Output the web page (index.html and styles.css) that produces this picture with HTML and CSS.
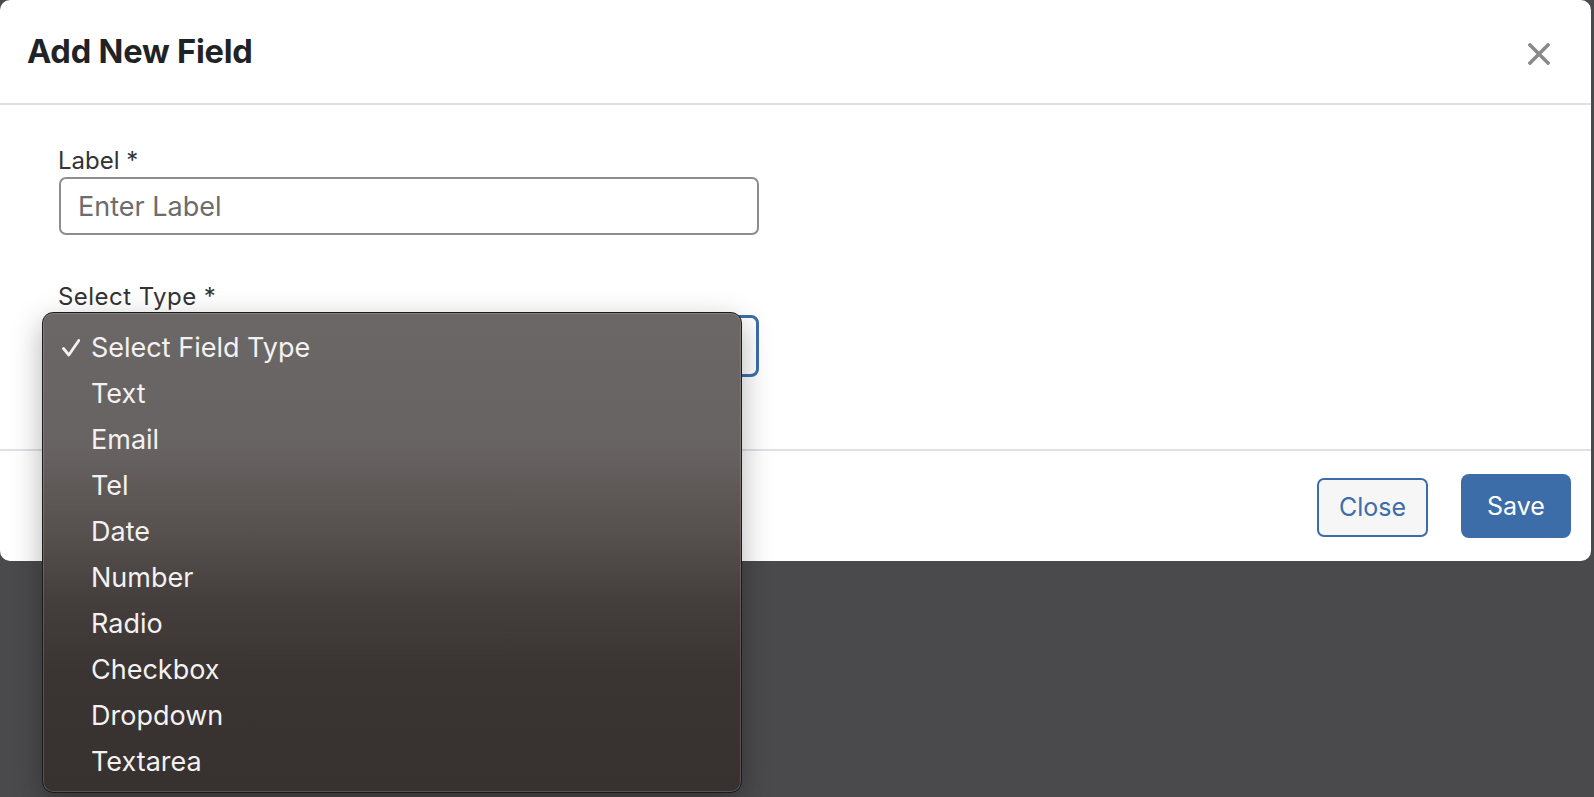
FILE: index.html
```html
<!DOCTYPE html>
<html lang="en">
<head>
<meta charset="utf-8">
<title>Add New Field</title>
<link rel="stylesheet" href="styles.css">
</head>
<body>
<div class="modal">
  <div class="modal-header">
    <h5 class="modal-title">Add New Field</h5>
    <button class="btn-close" aria-label="Close">
      <svg viewBox="0 0 22 22" width="22" height="22"><path d="M2 2 L20 20 M20 2 L2 20" stroke="#8a8a8a" stroke-width="3.6" stroke-linecap="square" fill="none"/></svg>
    </button>
  </div>
  <div class="modal-body">
    <div class="field">
      <label class="field-label">Label *</label>
      <input class="text-input" type="text" placeholder="Enter Label">
    </div>
    <div class="field">
      <label class="field-label field-label-wide">Select Type *</label>
      <div class="select-wrap">
        <div class="select-box" aria-label="Select Field Type"></div>
        <ul class="menu">
          <li class="menu-item"><span class="check"><svg viewBox="0 0 18 18" width="18" height="18"><path d="M1.5 9.5 L6.8 16 L16.8 1.5" stroke="#f3f1f1" stroke-width="2.8" stroke-linecap="round" stroke-linejoin="round" fill="none"/></svg></span>Select Field Type</li>
          <li class="menu-item"><span class="check"></span>Text</li>
          <li class="menu-item"><span class="check"></span>Email</li>
          <li class="menu-item"><span class="check"></span>Tel</li>
          <li class="menu-item"><span class="check"></span>Date</li>
          <li class="menu-item"><span class="check"></span>Number</li>
          <li class="menu-item"><span class="check"></span>Radio</li>
          <li class="menu-item"><span class="check"></span>Checkbox</li>
          <li class="menu-item"><span class="check"></span>Dropdown</li>
          <li class="menu-item"><span class="check"></span>Textarea</li>
        </ul>
      </div>
    </div>
  </div>
  <div class="modal-footer">
    <button class="btn btn-outline">Close</button>
    <button class="btn btn-primary">Save</button>
  </div>
</div>
</body>
</html>
```

FILE: styles.css
```css
* { box-sizing: border-box; }

html, body {
  margin: 0;
  padding: 0;
}

body {
  width: 1594px;
  height: 797px;
  overflow: hidden;
  background: #4a4a4c;
  font-family: Inter, "Liberation Sans", sans-serif;
  color: #212529;
}

.modal {
  width: 1591px;
  height: 561px;
  background: #ffffff;
  border-radius: 10px;
  display: flex;
  flex-direction: column;
}

.modal-header {
  flex: none;
  height: 105px;
  display: flex;
  align-items: center;
  justify-content: space-between;
  padding: 0 41px 0 27px;
  border-bottom: 2px solid #dfe1e4;
}

.modal-title {
  margin: 0;
  font-size: 32.6px;
  font-weight: 700;
  line-height: 1;
  color: #1f2326;
  letter-spacing: -0.2px;
}

.btn-close {
  width: 22px;
  height: 22px;
  padding: 0;
  margin-top: 4px;
  border: none;
  background: transparent;
  display: flex;
}

.modal-body {
  flex: none;
  height: 344px;
  padding: 40px 0 0 58px;
}

.field {
  width: 702px;
}

.field + .field {
  margin-top: 46px;
}

.field-label {
  display: block;
  font-size: 24px;
  line-height: 32px;
  color: #333333;
}

.field-label-wide {
  letter-spacing: 0.45px;
}

.text-input {
  display: block;
  width: 700px;
  height: 58px;
  margin-left: 1px;
  padding: 0 17px;
  border: 2px solid #8d8d8d;
  border-radius: 7px;
  font-family: Inter, "Liberation Sans", sans-serif;
  font-size: 27px;
  color: #212529;
  background: #fff;
  outline: none;
}

.text-input::placeholder {
  color: #6c6c6c;
}

.select-wrap {
  position: relative;
  margin-top: 2px;
  margin-left: 1px;
}

.select-box {
  width: 700px;
  height: 62px;
  border: 3px solid #3d6da8;
  border-radius: 8px;
  background: #fff;
}

.menu {
  position: absolute;
  left: -17px;
  top: -3px;
  width: 700px;
  height: 481px;
  margin: 0;
  padding: 11px 0 8px;
  list-style: none;
  border-radius: 11px;
  border: 1px solid #1c1b1b;
  background: linear-gradient(to bottom, #6b6767 0%, #676362 28%, #57514f 45%, #443e3c 60%, #3a3433 75%, #373130 100%);
  box-shadow: inset 0 0 0 1px rgba(255, 255, 255, 0.16), 0 10px 30px rgba(0, 0, 0, 0.3);
  z-index: 5;
}

.menu-item {
  height: 46px;
  display: flex;
  align-items: center;
  padding-left: 18px;
  font-size: 27px;
  color: #f3f1f1;
  white-space: nowrap;
}

.check {
  display: inline-flex;
  align-items: center;
  width: 30px;
  height: 18px;
  margin-top: 2px;
  padding-left: 1px;
}

.modal-footer {
  flex: none;
  height: 112px;
  border-top: 2px solid #dfe1e4;
  display: flex;
  align-items: center;
  justify-content: flex-end;
  gap: 33px;
  padding-right: 20px;
}

.btn {
  font-family: Inter, "Liberation Sans", sans-serif;
  font-size: 25px;
  line-height: 1;
  border-radius: 7px;
  cursor: pointer;
}

.btn-outline {
  width: 111px;
  height: 59px;
  margin-top: 3px;
  border: 2px solid #3d6da8;
  background: #f6f6f6;
  color: #3d6da8;
}

.btn-primary {
  width: 110px;
  height: 64px;
  border: none;
  background: #3d6da8;
  color: #ffffff;
  border-radius: 8px;
}
```
